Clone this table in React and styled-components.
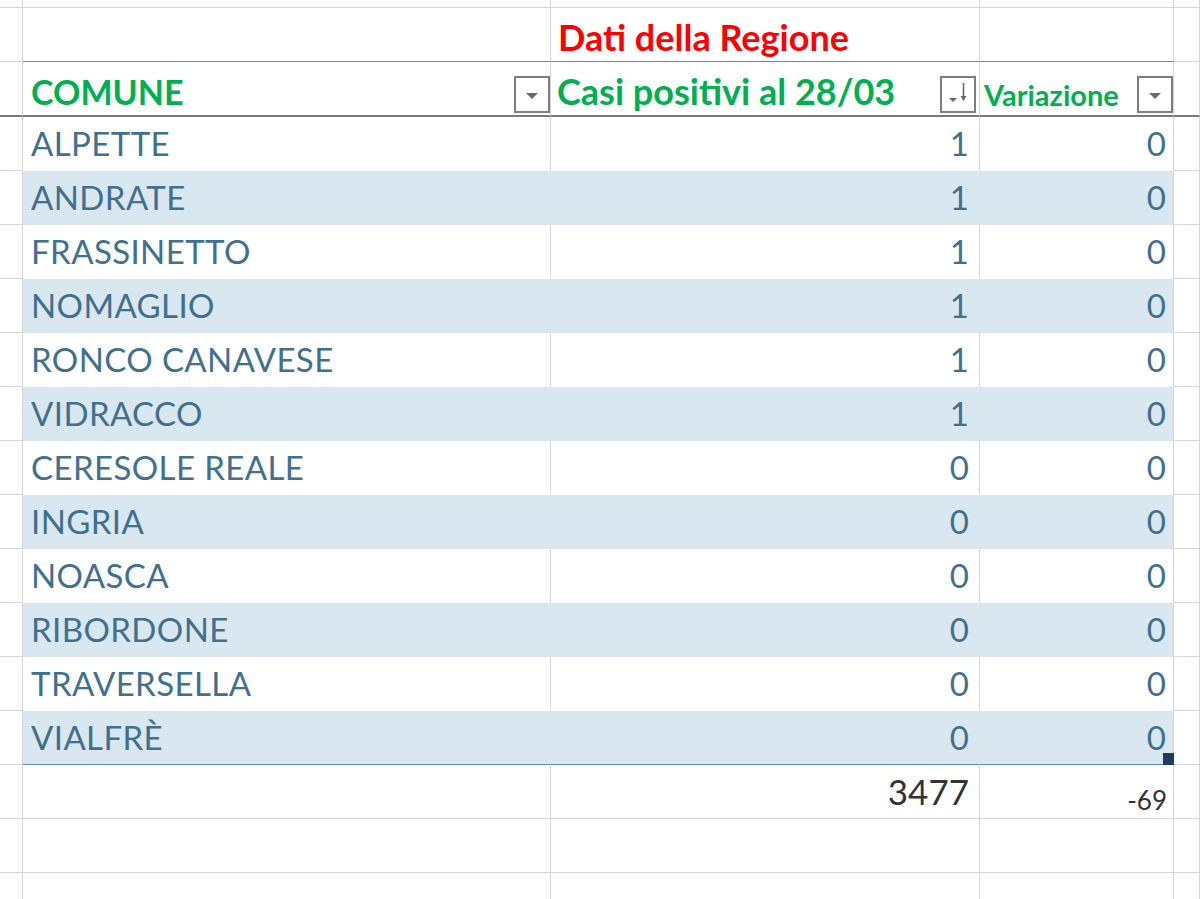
import React from "react"
import styled, { createGlobalStyle } from "styled-components"

const GRID = "#d6d6d6"
const BAND = "#d9e7f0"
const BLUE_LINE = "#5b8cb6"
const DARK_LINE = "#7a7a7a"
const GREEN = "#00b050"
const DATA = "#41708f"
const COLS = "23px 528px 429px 194px 1fr"

const GlobalStyle = createGlobalStyle`
  *, *::before, *::after { box-sizing: border-box; }
  html, body { margin: 0; padding: 0; background: #fff; }
  body { font-family: Lato, "Liberation Sans", sans-serif; overflow: hidden; }
`

const Sheet = styled.div`
  display: flex;
  flex-direction: column;
  width: 1200px;
  height: 899px;
  overflow: hidden;
  background: #fff;
`

const Row = styled.div`
  display: grid;
  grid-template-columns: ${COLS};
  height: ${p => p.$h}px;
  flex: none;
`

const Cell = styled.div`
  position: relative;
  display: flex;
  align-items: flex-end;
  justify-content: ${p => (p.$right ? "flex-end" : "space-between")};
  min-width: 0;
  padding: 0 ${p => p.$pr || 0}px ${p => p.$pb || 0}px ${p => p.$pl || 0}px;
  background: ${p => (p.$band ? BAND : "#fff")};
  border-right: 1px solid ${p => p.$vline || GRID};
  border-bottom: ${p => p.$hw || 1}px solid ${p => p.$hline || GRID};
`

const Title = styled.span`
  font-size: 36px;
  font-weight: 700;
  color: #ff0000;
  white-space: nowrap;
  line-height: 1.2;
`

const HeadText = styled.span`
  font-size: ${p => p.$size}px;
  font-weight: 700;
  color: ${GREEN};
  white-space: nowrap;
  line-height: 1.2;
  margin-bottom: 2px;
`

const Name = styled.span`
  font-size: 33px;
  color: ${DATA};
  white-space: nowrap;
  line-height: 1.2;
  letter-spacing: 0.4px;
`

const Num = styled.span`
  font-size: 33px;
  color: ${DATA};
  line-height: 1.2;
`

const Total = styled.span`
  font-size: ${p => (p.$small ? 26 : 35)}px;
  color: #333;
  line-height: 1.2;
`

const FilterBtn = styled.div`
  flex: none;
  width: 36px;
  height: 37px;
  margin: 0 ${p => p.$mr || 0}px 2px 0;
  border: 2px solid #7d7d7d;
  background: #fff;
  display: flex;
  align-items: center;
  justify-content: center;
`

const Handle = styled.div`
  position: absolute;
  right: -1px;
  bottom: -1px;
  width: 11px;
  height: 12px;
  background: #1f3b63;
`

function DropIcon() {
  return (
    <svg width="32" height="33" viewBox="0 0 32 33">
      <polygon points="10,15 22,15 16,21" fill="#6a6a6a" />
    </svg>
  )
}

function SortIcon() {
  return (
    <svg width="32" height="33" viewBox="0 0 32 33">
      <polygon points="7,20 15,20 11,24" fill="#6a6a6a" />
      <line x1="21.5" y1="5" x2="21.5" y2="22" stroke="#6a6a6a" strokeWidth="1.6" />
      <polygon points="18.5,18 24.5,18 21.5,23" fill="#6a6a6a" />
    </svg>
  )
}

const rows = [
  ["ALPETTE", 1, 0],
  ["ANDRATE", 1, 0],
  ["FRASSINETTO", 1, 0],
  ["NOMAGLIO", 1, 0],
  ["RONCO CANAVESE", 1, 0],
  ["VIDRACCO", 1, 0],
  ["CERESOLE REALE", 0, 0],
  ["INGRIA", 0, 0],
  ["NOASCA", 0, 0],
  ["RIBORDONE", 0, 0],
  ["TRAVERSELLA", 0, 0],
  ["VIALFRÈ", 0, 0],
]

export default function App() {
  return (
    <>
      <GlobalStyle />
      <Sheet>
        <Row $h={8}>
          <Cell />
          <Cell />
          <Cell />
          <Cell />
          <Cell />
        </Row>

        <Row $h={54}>
          <Cell />
          <Cell $hline={BLUE_LINE} />
          <Cell $hline={BLUE_LINE} $pl={7} $pb={2}>
            <Title>Dati della Regione</Title>
          </Cell>
          <Cell $hline={BLUE_LINE} />
          <Cell />
        </Row>

        <Row $h={55}>
          <Cell $hw={2} $hline={DARK_LINE} />
          <Cell $hw={2} $hline={DARK_LINE} $pl={8}>
            <HeadText $size={34}>COMUNE</HeadText>
            <FilterBtn>
              <DropIcon />
            </FilterBtn>
          </Cell>
          <Cell $hw={2} $hline={DARK_LINE} $pl={6}>
            <HeadText $size={36}>Casi positivi al 28/03</HeadText>
            <FilterBtn $mr={3}>
              <SortIcon />
            </FilterBtn>
          </Cell>
          <Cell $hw={2} $hline={DARK_LINE} $pl={4}>
            <HeadText $size={29}>Variazione</HeadText>
            <FilterBtn>
              <DropIcon />
            </FilterBtn>
          </Cell>
          <Cell $hw={2} $hline={DARK_LINE} />
        </Row>

        {rows.map(([name, casi, varz], i) => {
          const band = i % 2 === 1
          const last = i === rows.length - 1
          const hline = last ? BLUE_LINE : "transparent"
          const vline = band ? BAND : GRID
          return (
            <Row $h={54} key={name}>
              <Cell />
              <Cell $band={band} $hline={hline} $vline={vline} $pl={8} $pb={6}>
                <Name>{name}</Name>
              </Cell>
              <Cell $band={band} $hline={hline} $vline={vline} $right $pr={10} $pb={6}>
                <Num>{casi}</Num>
              </Cell>
              <Cell $band={band} $hline={hline} $right $pr={7} $pb={6}>
                <Num>{varz}</Num>
                {last && <Handle />}
              </Cell>
              <Cell />
            </Row>
          )
        })}

        <Row $h={54}>
          <Cell />
          <Cell />
          <Cell $right $pr={10} $pb={6}>
            <Total>3477</Total>
          </Cell>
          <Cell $right $pr={6} $pb={2}>
            <Total $small>-69</Total>
          </Cell>
          <Cell />
        </Row>

        <Row $h={54}>
          <Cell />
          <Cell />
          <Cell />
          <Cell />
          <Cell />
        </Row>

        <Row $h={54}>
          <Cell />
          <Cell />
          <Cell />
          <Cell />
          <Cell />
        </Row>
      </Sheet>
    </>
  )
}
